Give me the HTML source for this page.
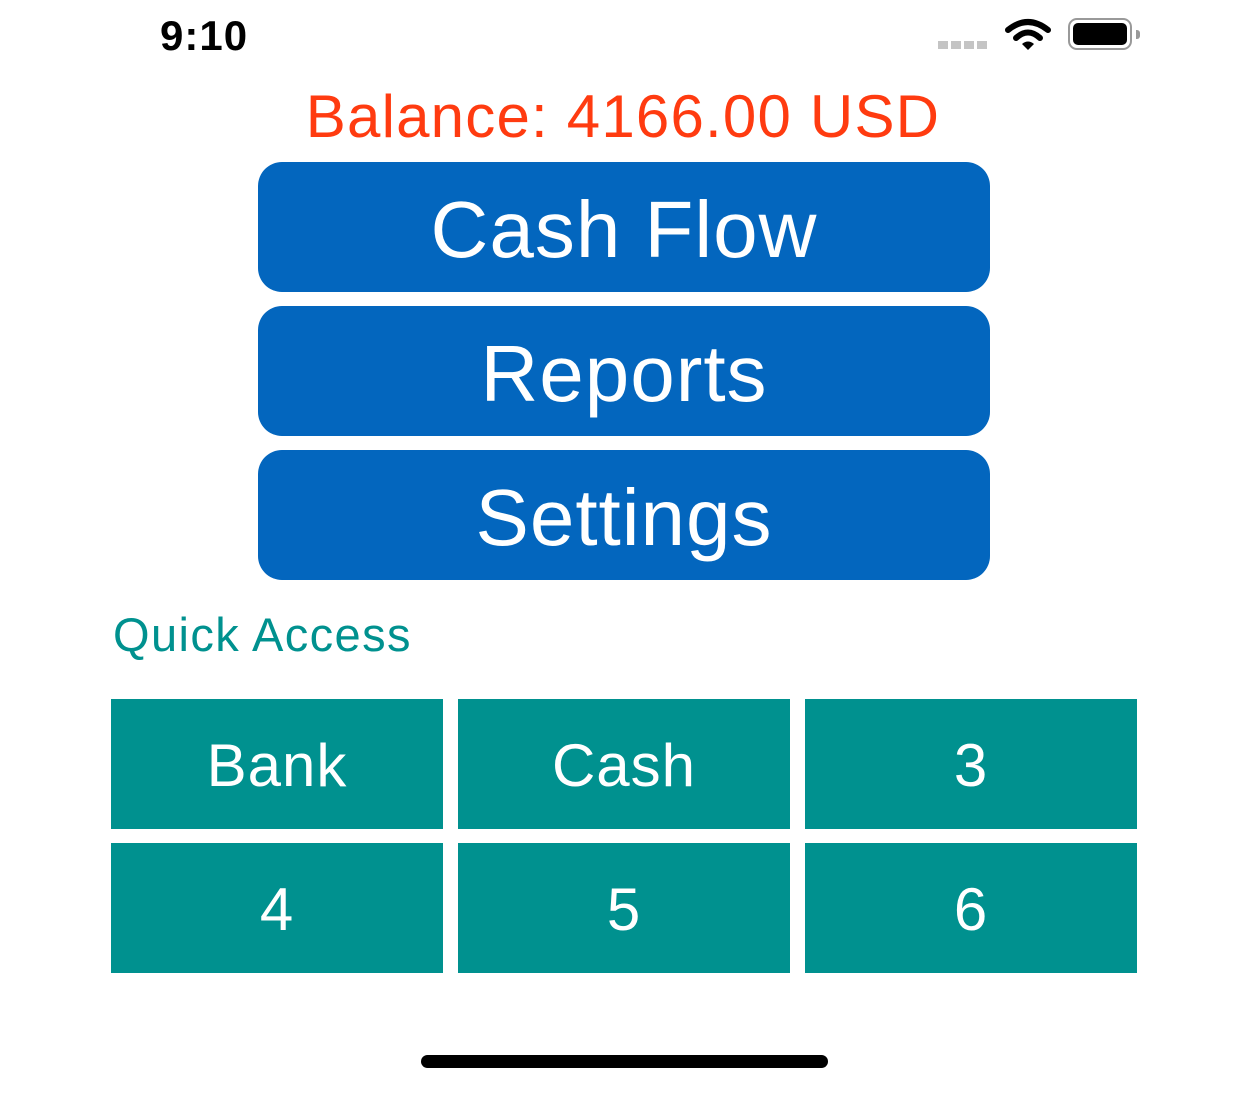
<!DOCTYPE html>
<html><head><meta charset="utf-8"><style>
body{margin:0;width:1242px;height:1093px;background:#fff;position:relative;overflow:hidden;font-family:"Liberation Sans",sans-serif}
.a{position:absolute}
.btn{position:absolute;left:258px;width:732px;height:130px;background:#0366BE;border-radius:24px;color:#fff;font-size:80px;text-align:center;line-height:136px;letter-spacing:1px}
.t{position:absolute;width:332px;height:130px;background:#00918F;color:#fff;font-size:60px;text-align:center;line-height:134px;letter-spacing:1px}
</style></head><body>
<div class="a" style="left:160px;top:12px;font-size:42px;font-weight:bold;letter-spacing:1px">9:10</div>
<div class="a" style="left:938px;top:41px;width:50px;height:8px;background:repeating-linear-gradient(90deg,#c4c4c4 0 10px,transparent 10px 13px)"></div>
<svg class="a" style="left:1004px;top:18px" width="48" height="34" viewBox="0 0 48 34"><path d="M4 12 Q24 -4 44 12" stroke="#000" stroke-width="6" fill="none" stroke-linecap="round"/><path d="M12 20 Q24 9 36 20" stroke="#000" stroke-width="6" fill="none" stroke-linecap="round"/><path d="M18 26 L24 32 L30 26 Q24 21 18 26Z" fill="#000"/></svg>
<div class="a" style="left:1068px;top:18px;width:64px;height:32px;border:2px solid #999;border-radius:9px;box-sizing:border-box"></div>
<div class="a" style="left:1073px;top:23px;width:54px;height:22px;background:#000;border-radius:5px"></div>
<div class="a" style="left:1136px;top:30px;width:4px;height:9px;background:#999;border-radius:0 3px 3px 0"></div>
<div class="a" style="left:0;width:1242px;top:82px;text-align:center;font-size:60px;color:#FF3B10;padding-left:2px;letter-spacing:1.2px">Balance: 4166.00 USD</div>
<div class="btn" style="top:162px">Cash Flow</div>
<div class="btn" style="top:306px">Reports</div>
<div class="btn" style="top:450px">Settings</div>
<div class="a" style="left:113px;top:607px;font-size:47px;color:#00918F;letter-spacing:1.4px">Quick Access</div>
<div class="t" style="left:111px;top:699px">Bank</div>
<div class="t" style="left:458px;top:699px">Cash</div>
<div class="t" style="left:805px;top:699px">3</div>
<div class="t" style="left:111px;top:843px">4</div>
<div class="t" style="left:458px;top:843px">5</div>
<div class="t" style="left:805px;top:843px">6</div>
<div class="a" style="left:421px;top:1055px;width:407px;height:13px;background:#000;border-radius:7px"></div>
</body></html>
